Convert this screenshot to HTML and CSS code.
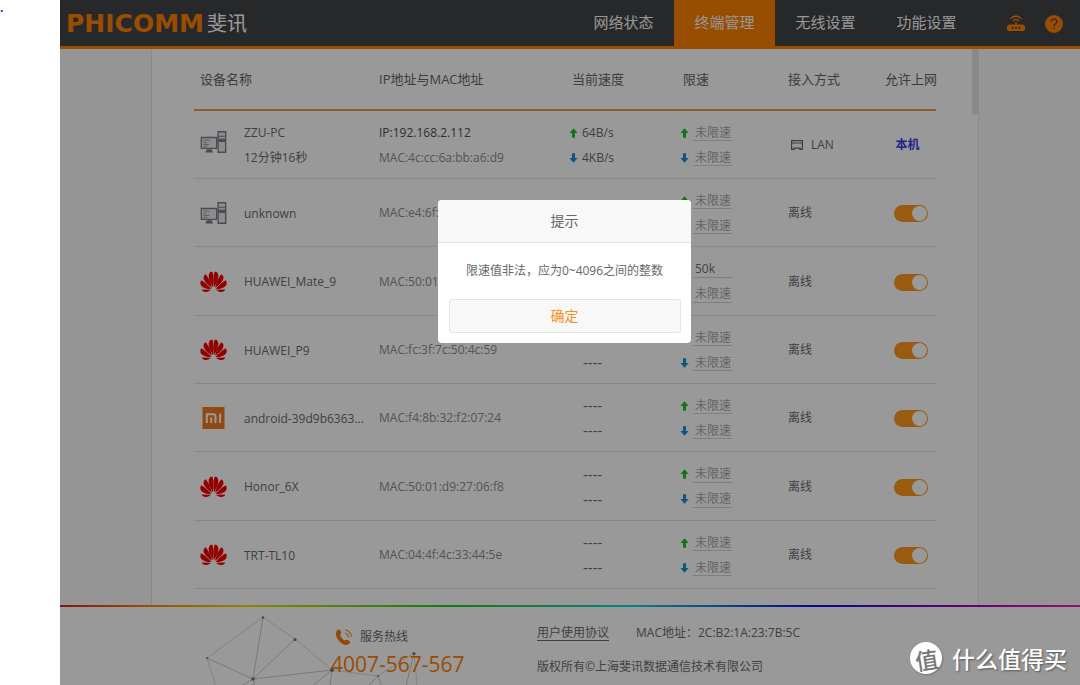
FILE: index.html
```html
<!DOCTYPE html>
<html lang="zh-CN">
<head>
<meta charset="utf-8">
<title>PHICOMM 斐讯 - 终端管理</title>
<link rel="stylesheet" href="styles.css">
</head>
<body>
<svg class="defs" aria-hidden="true">
  <symbol id="pc" viewBox="0 0 27 23">
    <path d="M.8 6.8h16v11.4H.8z" fill="#ececf2" stroke="#7c7e82" stroke-width="1.4"/>
    <path d="M3 9.500h5M3 12h3M3 14h6M3 16h4M8 11l2-2" stroke="#7c7e82" stroke-width=".8" fill="none"/>
    <path d="M6.500 19h5l1.500 3.500h-8z" fill="#7c7e82"/>
    <path d="M18.300.8h7.900v21.400h-7.900z" fill="#ececf2" stroke="#7c7e82" stroke-width="1.400"/>
    <path d="M18.500 5.500h7.500M18.500 8.500h7.500v2.500h-7.500z" stroke="#7c7e82" fill="#7c7e82"/>
  </symbol>
  <symbol id="huawei" viewBox="0 0 26 20">
    <g id="petals" fill="#f50000">
      <path d="M12.600 15C9 9.500 6.800 4 9.600.6c1-.5 1.800-.5 2.500-.3C13.300 4 13.100 10 12.600 15z"/>
      <path d="M11.600 15.600C6.500 12.300 2.800 8.500 3.500 5c.3-1.200 1-2 2.100-2.500C8 5.500 10.600 10.500 11.600 15.600z"/>
      <path d="M11 16.600C6.500 17.200 2 15.500.6 12.600.1 11 .3 9.300 1.200 8.300 4.800 10.500 8.500 13.300 11 16.600z"/>
      <path d="M10.600 17.400C8 19.600 5 20.300 3 19c-.8-.6-1-1.200-1.200-1.800z"/>
    </g>
    <use href="#petals" transform="matrix(-1 0 0 1 26 0)"/>
  </symbol>
  <symbol id="mi" viewBox="0 0 22 22">
    <path d="M0 0h22v22H0z" fill="#f47920"/>
    <path d="M4.300 16V7.300h6.400q2.300 0 2.300 2.300V16M8.700 16v-5.500M17.600 16V6.500" fill="none" stroke="#fff" stroke-width="2"/>
  </symbol>
  <symbol id="up" viewBox="0 0 9 10"><path d="M4.500.3 8.600 5H6v4.700H3V5H.4z" fill="#1fc02a"/></symbol>
  <symbol id="down" viewBox="0 0 9 10"><path d="M4.500 9.700 8.600 5H6V.3H3V5H.4z" fill="#1c8cd8"/></symbol>
</svg>

<span class="mark">.</span>
<div class="screen">
  <header class="topbar">
    <div class="brand"><span class="brand-en">PHICOMM</span><span class="brand-cn">斐讯</span></div>
    <nav class="nav">
      <a href="#">网络状态</a>
      <a href="#" class="active">终端管理</a>
      <a href="#">无线设置</a>
      <a href="#">功能设置</a>
    </nav>
    <div class="tools">
      <button type="button" aria-label="路由器">
        <svg width="18" height="18" viewBox="0 0 18 18"><rect y="9.500" width="18" height="6.500" rx="2.600" fill="#ff8000"/><path d="M4.800 12.800h1.800M8.100 12.800h1.800M11.400 12.800h1.800" stroke="#414447" stroke-width="1.700"/><path d="M3.500 3.800q5.500-5.400 11 0M6 6q3-3 6 0M9 7v3" fill="none" stroke="#ff8000" stroke-width="1.500"/></svg>
      </button>
      <button type="button" aria-label="帮助">
        <svg width="18" height="18" viewBox="0 0 18 18"><circle cx="9" cy="9" r="9" fill="#ff8000"/><path d="M6.200 7q0-3 2.800-3t2.800 2.700Q11.800 8 10.300 9 9 9.800 9 11.300M9 12.700v1.500" fill="none" stroke="#414447" stroke-width="1.200"/></svg>
      </button>
    </div>
  </header>

  <main class="main">
    <section class="panel">
      <span class="thumb"></span>
      <table class="devices">
        <colgroup><col class="c-name"><col class="c-addr"><col class="c-speed"><col class="c-limit"><col class="c-access"><col class="c-allow"></colgroup>
        <thead>
          <tr><th class="h-name">设备名称</th><th>IP地址与MAC地址</th><th class="h-arrow">当前速度</th><th class="h-arrow">限速</th><th>接入方式</th><th class="allow">允许上网</th></tr>
        </thead>
        <tbody>
          <tr>
            <td><div class="device online"><svg class="icon"><use href="#pc"/></svg><div><div class="name">ZZU-PC</div><div class="line">12分钟16秒</div></div></div></td>
            <td><div class="line ip">IP:192.168.2.112</div><div class="line mac">MAC:4c:cc:6a:bb:a6:d9</div></td>
            <td><div class="line rate"><svg><use href="#up"/></svg>64B/s</div><div class="line rate"><svg><use href="#down"/></svg>4KB/s</div></td>
            <td><label class="line rate"><svg><use href="#up"/></svg><input type="text" aria-label="上行限速" placeholder="未限速"></label><label class="line rate"><svg><use href="#down"/></svg><input type="text" aria-label="下行限速" placeholder="未限速"></label></td>
            <td><div class="lan"><svg width="12" height="10" viewBox="0 0 12 10"><path d="M.6.600h10.800v8.800H9V8.200H3v1.200H.6zM1 3h10" fill="none" stroke="#66686a" stroke-width="1.200"/></svg>LAN</div></td>
            <td class="allow"><strong class="self">本机</strong></td>
          </tr>
          <tr>
            <td><div class="device"><svg class="icon"><use href="#pc"/></svg><div class="name">unknown</div></div></td>
            <td><div class="mac">MAC:e4:6f:</div></td>
            <td></td>
            <td><label class="line rate"><svg><use href="#up"/></svg><input type="text" aria-label="上行限速" placeholder="未限速"></label><label class="line rate"><svg><use href="#down"/></svg><input type="text" aria-label="下行限速" placeholder="未限速"></label></td>
            <td>离线</td><td class="allow"><input class="switch" type="checkbox" aria-label="允许上网" checked></td>
          </tr>
          <tr>
            <td><div class="device"><svg class="icon"><use href="#huawei"/></svg><div class="name">HUAWEI_Mate_9</div></div></td>
            <td><div class="mac">MAC:50:01</div></td>
            <td></td>
            <td><label class="line rate"><svg><use href="#up"/></svg><input type="text" aria-label="上行限速" value="50k"></label><label class="line rate"><svg><use href="#down"/></svg><input type="text" aria-label="下行限速" placeholder="未限速"></label></td>
            <td>离线</td><td class="allow"><input class="switch" type="checkbox" aria-label="允许上网" checked></td>
          </tr>
          <tr>
            <td><div class="device"><svg class="icon"><use href="#huawei"/></svg><div class="name">HUAWEI_P9</div></div></td>
            <td><div class="mac">MAC:fc:3f:7c:50:4c:59</div></td>
            <td><div class="line idle">----</div><div class="line idle">----</div></td>
            <td><label class="line rate"><svg><use href="#up"/></svg><input type="text" aria-label="上行限速" placeholder="未限速"></label><label class="line rate"><svg><use href="#down"/></svg><input type="text" aria-label="下行限速" placeholder="未限速"></label></td>
            <td>离线</td><td class="allow"><input class="switch" type="checkbox" aria-label="允许上网" checked></td>
          </tr>
          <tr>
            <td><div class="device"><svg class="icon"><use href="#mi"/></svg><div class="name">android-39d9b6363...</div></div></td>
            <td><div class="mac">MAC:f4:8b:32:f2:07:24</div></td>
            <td><div class="line idle">----</div><div class="line idle">----</div></td>
            <td><label class="line rate"><svg><use href="#up"/></svg><input type="text" aria-label="上行限速" placeholder="未限速"></label><label class="line rate"><svg><use href="#down"/></svg><input type="text" aria-label="下行限速" placeholder="未限速"></label></td>
            <td>离线</td><td class="allow"><input class="switch" type="checkbox" aria-label="允许上网" checked></td>
          </tr>
          <tr>
            <td><div class="device"><svg class="icon"><use href="#huawei"/></svg><div class="name">Honor_6X</div></div></td>
            <td><div class="mac">MAC:50:01:d9:27:06:f8</div></td>
            <td><div class="line idle">----</div><div class="line idle">----</div></td>
            <td><label class="line rate"><svg><use href="#up"/></svg><input type="text" aria-label="上行限速" placeholder="未限速"></label><label class="line rate"><svg><use href="#down"/></svg><input type="text" aria-label="下行限速" placeholder="未限速"></label></td>
            <td>离线</td><td class="allow"><input class="switch" type="checkbox" aria-label="允许上网" checked></td>
          </tr>
          <tr>
            <td><div class="device"><svg class="icon"><use href="#huawei"/></svg><div class="name">TRT-TL10</div></div></td>
            <td><div class="mac">MAC:04:4f:4c:33:44:5e</div></td>
            <td><div class="line idle">----</div><div class="line idle">----</div></td>
            <td><label class="line rate"><svg><use href="#up"/></svg><input type="text" aria-label="上行限速" placeholder="未限速"></label><label class="line rate"><svg><use href="#down"/></svg><input type="text" aria-label="下行限速" placeholder="未限速"></label></td>
            <td>离线</td><td class="allow"><input class="switch" type="checkbox" aria-label="允许上网" checked></td>
          </tr>
        </tbody>
      </table>
    </section>
  </main>

  <footer class="footer">
    <div class="footer-inner">
      <svg class="mesh" width="220" height="78" viewBox="200 607 220 78" aria-hidden="true">
        <path d="M263 617 207 658 216 686M263 617 295 639 332 670 378 676 414 653 417 686" fill="none" stroke="#dcdcdc"/>
        <path d="M263 617 253 679 295 639M207 658 253 679 332 670 312 686M332 670 330 686M241 686 253 679 255 686M368 686 378 676 382 686M414 653 406 686" fill="none" stroke="#cacaca"/>
        <g fill="#777"><circle cx="263" cy="617.500" r="1.300"/><circle cx="295" cy="639.500" r="1.500"/><circle cx="253" cy="679" r="1.800"/><circle cx="332" cy="670" r="2"/><circle cx="414" cy="653.500" r="1.600"/><circle cx="207" cy="658" r="1"/><circle cx="378" cy="676" r="1"/></g>
      </svg>
      <div class="hotline">
        <div class="hotline-label"><svg width="17" height="16" viewBox="0 0 17 16"><path d="M1.500.7C2.900-.3 3.800.2 4.700 2c.8 1.700.6 2.300-.3 3.200-.5.6.1 1.900 1.300 3.400 1.300 1.500 2.500 2.600 3.400 2.300 1.200-.8 1.900-.7 3.500.2 1.800 1 2 1.900.8 3.100-1.500 1.600-4.300 2.200-7.200.3C3 12.300.8 9.500.2 6.300-.3 3.500.2 1.700 1.500.7z" transform="translate(0 .3)" fill="#f47a0c"/><path d="M9 4q3.200 1 3.800 4.300M9.500.8q5.600 1.600 6.400 7.200" fill="none" stroke="#f4984a" stroke-width="1.200"/></svg>服务热线</div>
        <div class="hotline-number">4007-567-567</div>
      </div>
      <div class="legal">
        <div class="legal-row"><a href="#">用户使用协议</a><span>MAC地址：2C:B2:1A:23:7B:5C</span></div>
        <div class="legal-row">版权所有©上海斐讯数据通信技术有限公司</div>
      </div>
    </div>
  </footer>

  <div class="overlay">
    <div class="dialog" role="dialog" aria-labelledby="dialog-title">
      <h2 id="dialog-title">提示</h2>
      <p>限速值非法，应为0~4096之间的整数</p>
      <button type="button">确定</button>
    </div>
  </div>
  <div class="watermark"><span class="badge"><span>值</span></span>什么值得买</div>
</div>
</body>
</html>
```
FILE: styles.css
```css
* { box-sizing: border-box; }
body {
  margin: 0;
  padding-left: 60px;
  background: #fff;
  color: #6c6c6c;
  font: 12px/18px "Open Sans", "Noto Sans CJK SC", sans-serif;
}
a { color: inherit; text-decoration: none; }
button, input { font: inherit; }
.defs { position: absolute; width: 0; height: 0; }
.mark { position: absolute; left: 0; top: 0; color: #22d; font-weight: bold; line-height: 16px; }

.screen {
  position: relative;
  display: flex;
  flex-direction: column;
  height: 100vh;
  overflow: hidden;
  background: #f8f8f8;
}

.topbar {
  display: flex;
  flex: none;
  height: 49px;
  padding: 0 17px 0 6px;
  background: #414447;
  border-bottom: 3px solid #ff8000;
}
.brand { display: flex; align-items: center; gap: 3px; flex: 1; padding-top: 2px; white-space: nowrap; }
.brand-en { color: #ff8000; font: bold 25px/44px "DejaVu Sans", sans-serif; }
.brand-cn { color: #fff; font-size: 20px; line-height: 44px; }
.nav { display: flex; }
.nav a { padding: 0 20px; width: 101px; color: #fafafa; font-size: 15px; line-height: 44px; text-align: center; white-space: nowrap; }
.nav .active { background: #ff8000; }
.tools { display: flex; align-items: center; gap: 20px; margin-left: 30px; padding-top: 2px; }
.tools button { padding: 0; border: 0; background: none; height: 18px; }
.tools svg { display: block; }

.main { flex: 1; min-height: 0; padding-right: 10px; display: flex; justify-content: center; }
.panel {
  position: relative;
  width: 828px;
  padding: 0 42px;
  background: #fff;
  border: 1px solid #e6e6e6;
  border-width: 0 1px;
}
.thumb { position: absolute; right: 0; top: 0; width: 6px; height: 66px; border-radius: 0 0 3px 3px; background: #e4e4e4; }

.devices { width: 100%; border-collapse: separate; border-spacing: 0; table-layout: fixed; }
.c-name { width: 185px; }
.c-addr { width: 190px; }
.c-speed { width: 111px; }
.c-limit { width: 108px; }
.c-access { width: 97px; }
.c-allow { width: 51px; }
th, td { padding: 0; text-align: left; white-space: nowrap; }
th { height: 62px; border-bottom: 2px solid #f0964a; font-size: 13px; font-weight: normal; color: #666; }
td { height: 68px; padding-top: 1px; border-bottom: 1px solid #e4e4e4; }
tbody tr:nth-child(3n) td { height: 69px; }
.h-name { padding-left: 6px; }
.h-arrow { padding-left: 3px; }
.allow { text-align: center; }
.device { display: flex; align-items: center; }
.icon { width: 27px; height: 22px; margin: 0 17px 0 6px; }
.online .icon { margin-bottom: 6px; }
.name { line-height: 25px; }
.line { line-height: 25px; height: 25px; }
.ip { color: #505050; }
.mac { color: #8c8c8c; }
.rate { display: flex; align-items: center; gap: 4px; }
.rate svg { width: 9px; height: 10px; }
.idle { padding-left: 14px; font-size: 15px; }
.rate input {
  width: 39px;
  height: 17px;
  padding: 0 0 0 2px;
  border: 0;
  border-bottom: 1px solid #d4d4d4;
  background: none;
  color: #707070;
  line-height: 16px;
}
.rate input::placeholder { color: #a8a8a8; opacity: 1; }
.lan { display: flex; align-items: center; gap: 8px; padding-left: 3px; }
.self { padding-right: 6px; color: #3a3ae8; }
.switch {
  appearance: none;
  position: relative;
  display: inline-block;
  width: 34px;
  height: 17px;
  margin: 0;
  border-radius: 9px;
  background: #ff981c;
  vertical-align: middle;
}
.switch::after { content: ""; position: absolute; right: 1px; top: 1px; width: 15px; height: 15px; border-radius: 50%; background: #fff; }

.footer {
  flex: none;
  background: #fff;
  height: 80px;
}
.footer::before {
  content: "";
  display: block;
  height: 2px;
  background: linear-gradient(90deg, #e02020, #ff8000 8%, #f0e000 18%, #20d020 38%, #10d8d8 56%, #1010e0 74%, #a000c0 88%, #f020c0);
}
.footer-inner { position: relative; display: flex; width: 828px; margin: 0 auto; padding-left: 180px; left: -5px; }
.mesh { position: absolute; left: 49px; top: 0; }
.hotline { position: relative; width: 206px; padding-top: 20px; }
.hotline-label { display: flex; align-items: center; gap: 7px; padding-left: 5px; line-height: 20px; }
.hotline-number { color: #ff8000; font-size: 21px; line-height: 34px; }
.legal { padding-top: 9px; }
.legal-row { display: flex; gap: 27px; line-height: 34px; white-space: nowrap; }
.legal-row a { text-decoration: underline; text-underline-offset: 3px; }

.overlay {
  position: absolute;
  inset: 0;
  display: flex;
  align-items: flex-start;
  justify-content: center;
  padding: 200px 11px 0 0;
  background: rgba(0, 0, 0, .4);
}
.dialog { width: 253px; border-radius: 4px; overflow: hidden; background: #fff; color: #666; text-align: center; padding-bottom: 10px; }
.dialog h2 { margin: 0; background: #f8f8f8; border-bottom: 1px solid #e2e2e2; font-size: 14px; font-weight: normal; line-height: 42px; }
.dialog p { margin: 0; line-height: 56px; white-space: nowrap; }
.dialog button { display: block; width: 232px; height: 34px; margin: 0 auto; border: 1px solid #e4e4e4; border-radius: 3px; background: #f8f8f8; color: #ff8c1a; font-size: 14px; }

.watermark {
  position: absolute;
  right: 13px;
  bottom: 10px;
  display: flex;
  align-items: center;
  gap: 10px;
  color: #fff;
  font-family: "Noto Sans CJK SC", sans-serif;
  font-weight: 500;
  font-size: 23px;
  line-height: 34px;
  text-shadow: 1px 1px 2px #555;
}
.badge { display: grid; place-items: center; width: 32px; height: 32px; border-radius: 50%; background: #fff; color: #777; text-shadow: none; box-shadow: 1px 1px 2px #777; }
.badge span { transform: rotate(-9deg); }
```
